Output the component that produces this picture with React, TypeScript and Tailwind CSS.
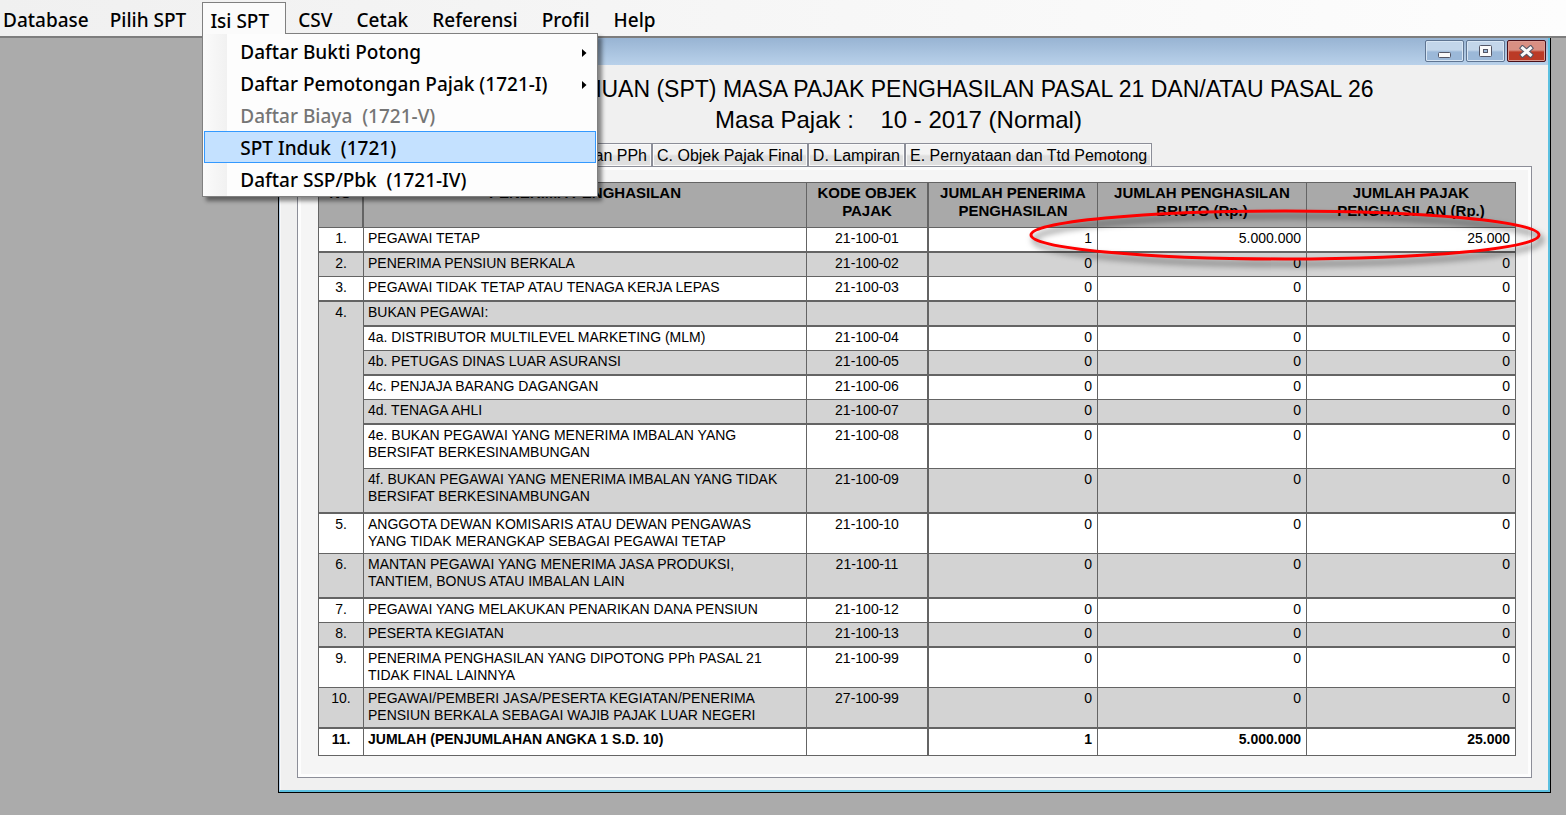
import type { ReactNode } from 'react';

type Row = {
  no?: string;
  span?: number;
  name: string;
  code: string;
  values: [string, string, string];
  shaded: boolean;
  thick: boolean;
  height: string;
  bold?: boolean;
};

const zeros: [string, string, string] = ['0', '0', '0'];

const rows: Row[] = [
  { no: '1.', name: 'PEGAWAI TETAP', code: '21-100-01', values: ['1', '5.000.000', '25.000'], shaded: false, thick: true, height: 'h-[25px]' },
  { no: '2.', name: 'PENERIMA PENSIUN BERKALA', code: '21-100-02', values: zeros, shaded: true, thick: false, height: 'h-[24px]' },
  { no: '3.', name: 'PEGAWAI TIDAK TETAP ATAU TENAGA KERJA LEPAS', code: '21-100-03', values: zeros, shaded: false, thick: true, height: 'h-[25px]' },
  { no: '4.', span: 7, name: 'BUKAN PEGAWAI:', code: '', values: ['', '', ''], shaded: true, thick: true, height: 'h-[25px]' },
  { name: '4a. DISTRIBUTOR MULTILEVEL MARKETING (MLM)', code: '21-100-04', values: zeros, shaded: false, thick: false, height: 'h-[24px]' },
  { name: '4b. PETUGAS DINAS LUAR ASURANSI', code: '21-100-05', values: zeros, shaded: true, thick: true, height: 'h-[25px]' },
  { name: '4c. PENJAJA BARANG DAGANGAN', code: '21-100-06', values: zeros, shaded: false, thick: false, height: 'h-[24px]' },
  { name: '4d. TENAGA AHLI', code: '21-100-07', values: zeros, shaded: true, thick: true, height: 'h-[25px]' },
  { name: '4e. BUKAN PEGAWAI YANG MENERIMA IMBALAN YANG BERSIFAT BERKESINAMBUNGAN', code: '21-100-08', values: zeros, shaded: false, thick: false, height: 'h-[44px]' },
  { name: '4f. BUKAN PEGAWAI YANG MENERIMA IMBALAN YANG TIDAK BERSIFAT BERKESINAMBUNGAN', code: '21-100-09', values: zeros, shaded: true, thick: true, height: 'h-[45px]' },
  { no: '5.', name: 'ANGGOTA DEWAN KOMISARIS ATAU DEWAN PENGAWAS YANG TIDAK MERANGKAP SEBAGAI PEGAWAI TETAP', code: '21-100-10', values: zeros, shaded: false, thick: false, height: 'h-[40px]' },
  { no: '6.', name: 'MANTAN PEGAWAI YANG MENERIMA JASA PRODUKSI, TANTIEM, BONUS ATAU IMBALAN LAIN', code: '21-100-11', values: zeros, shaded: true, thick: true, height: 'h-[45px]' },
  { no: '7.', name: 'PEGAWAI YANG MELAKUKAN PENARIKAN DANA PENSIUN', code: '21-100-12', values: zeros, shaded: false, thick: false, height: 'h-[24px]' },
  { no: '8.', name: 'PESERTA KEGIATAN', code: '21-100-13', values: zeros, shaded: true, thick: true, height: 'h-[25px]' },
  { no: '9.', name: 'PENERIMA PENGHASILAN YANG DIPOTONG PPh PASAL 21 TIDAK FINAL LAINNYA', code: '21-100-99', values: zeros, shaded: false, thick: false, height: 'h-[40px]' },
  { no: '10.', name: 'PEGAWAI/PEMBERI JASA/PESERTA KEGIATAN/PENERIMA PENSIUN BERKALA SEBAGAI WAJIB PAJAK LUAR NEGERI', code: '27-100-99', values: zeros, shaded: true, thick: true, height: 'h-[41px]' },
  { no: '11.', name: 'JUMLAH (PENJUMLAHAN ANGKA 1 S.D. 10)', code: '', values: ['1', '5.000.000', '25.000'], shaded: false, thick: false, height: 'h-[27px]', bold: true },
];

const menuButton = 'h-full px-3 pt-[5px]';

function TopMenu() {
  return (
    <nav className="relative z-20 flex h-[38px] items-stretch border-b-2 border-[#7d7d7d] bg-linear-to-r from-[#f0f0f0] to-[#fdfdfd] font-['Noto_Sans',sans-serif] text-[19px] font-medium text-black">
      <button className="h-full pt-[5px] pr-[11px] pl-[3px]">Database</button>
      <button className="h-full pt-[5px] pr-[16px] pl-[10px]">Pilih SPT</button>
      <div className="relative mt-[2px] -mb-[2px] flex">
        <button className="relative z-10 h-[32px] w-[84px] border border-b-0 border-[#808080] bg-[#fbfbfb] pt-[4px] pr-[9px]">Isi SPT</button>
        <DropDown />
      </div>
      <button className={menuButton}>CSV</button>
      <button className={menuButton}>Cetak</button>
      <button className={menuButton}>Referensi</button>
      <button className={menuButton}>Profil</button>
      <button className={menuButton}>Help</button>
    </nav>
  );
}

function MenuItem({ children, arrow, disabled, active }: { children: ReactNode; arrow?: boolean; disabled?: boolean; active?: boolean }) {
  return (
    <button
      disabled={disabled}
      className={`flex h-8 w-full items-center justify-between border pt-[3px] pr-[8px] pl-[35px] text-left whitespace-pre ${active ? 'border-[#3399ff] bg-[#c4e1ff]' : 'border-transparent'} ${disabled ? 'text-[#757575]' : 'text-black'}`}
    >
      {children}
      {arrow && (
        <svg width="5" height="8" viewBox="0 0 5 8" aria-hidden="true">
          <path d="M0 0L4.5 4L0 8Z" fill="#000" />
        </svg>
      )}
    </button>
  );
}

function DropDown() {
  return (
    <div className="absolute top-[31px] left-0 w-[396px] border border-[#808080] bg-[#fdfdfd] bg-linear-to-r from-[#fbfbfb] to-[#f1f1f1] bg-[length:24px_100%] bg-no-repeat p-px shadow-[4px_4px_4px_rgba(0,0,0,0.45)]">
      <MenuItem arrow>Daftar Bukti Potong</MenuItem>
      <MenuItem arrow>Daftar Pemotongan Pajak (1721-I)</MenuItem>
      <MenuItem disabled>{'Daftar Biaya  (1721-V)'}</MenuItem>
      <MenuItem active>{'SPT Induk  (1721)'}</MenuItem>
      <MenuItem>{'Daftar SSP/Pbk  (1721-IV)'}</MenuItem>
    </div>
  );
}

const captionButton =
  'flex h-[22px] w-[39px] items-center justify-center rounded-[2px] border border-[#5f7592] bg-linear-to-b from-[#c3d6ea] from-45% to-[#9bb8d8] to-55% shadow-[inset_0_0_0_1px_#d8e6f4]';

function TitleBar() {
  return (
    <div className="flex h-[27px] items-start justify-end gap-[2px] bg-linear-to-b from-[#98b4d3] to-[#b9d1ea] pt-[2px] pr-[2px]">
      <button className={captionButton} aria-label="Minimize">
        <svg width="13" height="15" viewBox="0 0 13 15">
          <rect x="0.5" y="8.5" width="12" height="5" rx="1" fill="#fafafa" stroke="#535666" />
        </svg>
      </button>
      <button className={captionButton} aria-label="Maximize">
        <svg width="13" height="12" viewBox="0 0 13 12">
          <rect x="0.5" y="0.5" width="12" height="11" rx="1" fill="#fafafa" stroke="#535666" />
          <rect x="4.5" y="4.5" width="4" height="3" fill="#9bb8d8" stroke="#535666" />
        </svg>
      </button>
      <button
        className="flex h-[22px] w-[39px] items-center justify-center rounded-[2px] border border-[#4a0f18] bg-linear-to-b from-[#d98f83] from-45% to-[#bb3a26] to-55% shadow-[inset_0_0_0_1px_#dc9c92]"
        aria-label="Close"
      >
        <svg width="15" height="13" viewBox="0 0 15 13">
          <path d="M3.500 3L11.500 10M11.500 3L3.500 10" stroke="#535666" strokeWidth="5" strokeLinecap="square" />
          <path d="M3.500 3L11.500 10M11.500 3L3.500 10" stroke="#fafafa" strokeWidth="3" strokeLinecap="square" />
        </svg>
      </button>
    </div>
  );
}

function Tabs() {
  const tab =
    'h-[23px] border border-b-0 border-[#8c8e98] bg-linear-to-b from-[#f3f3f3] from-45% to-[#dfdfdf] to-55% px-1 pt-px shadow-[inset_0_0_0_1px_#fafafa]';
  return (
    <div className="flex text-[16px] leading-[22px] whitespace-nowrap text-black" role="tablist">
      <button role="tab" className={`w-[168px] ${tab}`}>A. Identitas</button>
      <button role="tab" className={`w-[187px] text-right ${tab}`}>B. Penghitungan PPh</button>
      <button role="tab" className={tab}>C. Objek Pajak Final</button>
      <button role="tab" className={tab}>D. Lampiran</button>
      <button role="tab" className={tab}>E. Pernyataan dan Ttd Pemotong</button>
    </div>
  );
}

function IncomeTable() {
  const head = 'border-b border-[#646464] bg-[#a9a9a9] p-0 pt-px align-top font-bold';
  return (
    <table className="w-full table-fixed border-separate border-spacing-0 border-t border-l border-[#646464] text-[14px] leading-[17px] text-black">
      <colgroup>
        <col className="w-[45px]" />
        <col />
        <col className="w-[122px]" />
        <col className="w-[169px]" />
        <col className="w-[209px]" />
        <col className="w-[209px]" />
      </colgroup>
      <thead className="text-[15px] leading-[18px]">
        <tr className="h-[45px]">
          <th className={`border-r-2 ${head}`}>NO</th>
          <th className={`border-r ${head}`}>PENERIMA PENGHASILAN</th>
          <th className={`border-r-2 ${head}`}>KODE OBJEK<br />PAJAK</th>
          <th className={`border-r ${head}`}>JUMLAH PENERIMA<br />PENGHASILAN</th>
          <th className={`border-r ${head}`}>JUMLAH PENGHASILAN<br />BRUTO (Rp.)</th>
          <th className={`border-r ${head}`}>JUMLAH PAJAK<br />PENGHASILAN (Rp.)</th>
        </tr>
      </thead>
      <tbody>
        {rows.map((row) => {
          const cell = `border-[#646464] pt-[2px] pb-0 align-top ${row.thick ? 'border-b-2' : 'border-b'} ${row.shaded ? 'bg-[#d3d3d3]' : 'bg-white'}`;
          return (
            <tr key={row.name} className={`${row.height} ${row.bold ? 'font-bold' : ''}`}>
              {row.no && (
                <td rowSpan={row.span} className={`border-r px-0 text-center ${cell}`}>{row.no}</td>
              )}
              <td className={`border-r pr-[24px] pl-[4px] ${cell}`}>{row.name}</td>
              <td className={`border-r-2 px-0 text-center ${cell}`}>{row.code}</td>
              {row.values.map((value, i) => (
                <td key={i} className={`border-r pr-[5px] pl-0 text-right ${cell}`}>{value}</td>
              ))}
            </tr>
          );
        })}
      </tbody>
    </table>
  );
}

function Highlight() {
  return (
    <svg className="pointer-events-none absolute top-[18px] -right-[40px] drop-shadow-[3px_5px_3px_rgba(0,0,0,0.6)]" width="535" height="76" viewBox="0 0 535 76" aria-hidden="true">
      <ellipse cx="264" cy="39" rx="254" ry="24" fill="none" stroke="#fe0000" strokeWidth="3" />
    </svg>
  );
}

export default function App() {
  return (
    <div className="min-h-screen bg-[#ababab] font-['Liberation_Sans',Arial,sans-serif]">
      <TopMenu />
      <main className="pr-[15px] pb-[22px] pl-[278px]">
        <section className="border border-t-0 border-black bg-[#b9d1ea]">
          <div className="border-r-2 border-b-2 border-l border-r-[#5cc0e0] border-b-[#5cc0e0] border-l-[#b9d1ea]">
            <TitleBar />
            <div className="border-l border-[#f8f8f8] bg-[#f0f0f0] px-[16px] pt-[9px] pb-[12px]">
              <header className="text-center whitespace-pre text-black">
                <h1 className="pr-[84px] text-[23px] leading-[30px]">SURAT PEMBERITAHUAN (SPT) MASA PAJAK PENGHASILAN PASAL 21 DAN/ATAU PASAL 26</h1>
                <p className="pr-[32px] text-[24px] leading-[31px]">{'Masa Pajak :    10 - 2017 (Normal)'}</p>
              </header>
              <div className="pt-[8px]">
                <Tabs />
                <div className="border border-[#8c8e98] bg-[#f5f5f5] px-[15px] pt-[11px] pb-[21px] shadow-[inset_0_0_0_3px_#fdfdfd]">
                  <div className="relative pt-[4px] pl-[5px]">
                    <IncomeTable />
                    <Highlight />
                  </div>
                </div>
              </div>
            </div>
          </div>
        </section>
      </main>
    </div>
  );
}
